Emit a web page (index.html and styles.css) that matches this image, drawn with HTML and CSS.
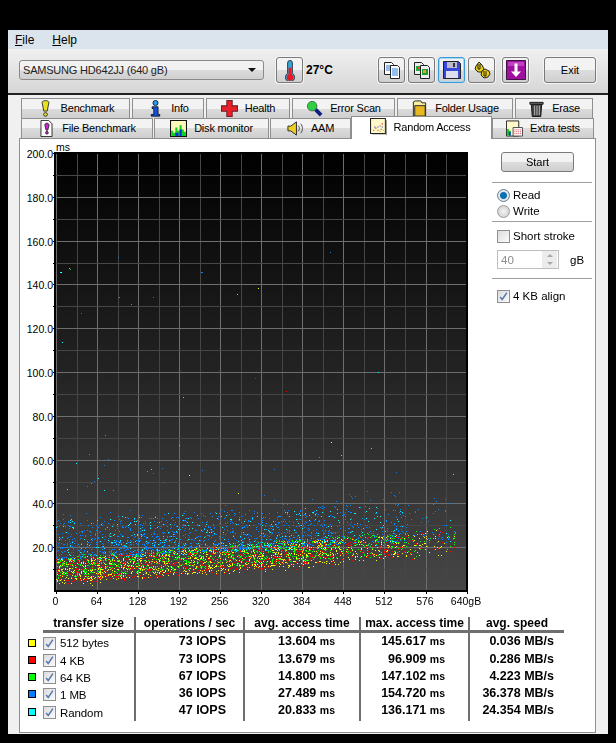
FILE: index.html
```html
<!DOCTYPE html>
<html lang="en">
<head>
	<meta charset="UTF-8">
	<title>HD Tune Pro</title>
	<link rel="stylesheet" href="styles.css">
</head>
<body>
	<svg class="defs" width="0" height="0">
		<symbol id="i-bench" viewBox="0 0 16 20"><path d="M4 3c0-3 8-3 8 0l-2 10H6z" fill="#e8e020" stroke="#222"/><circle cx="8" cy="17" r="2.2" fill="#e8e020" stroke="#222"/></symbol>
		<symbol id="i-info" viewBox="0 0 16 20"><circle cx="8" cy="3.5" r="3" fill="#20a0f0" stroke="#111"/><path d="M4 8h7v9h2v2H3v-2h3v-7H4z" fill="#1050e0" stroke="#111"/></symbol>
		<symbol id="i-health" viewBox="0 0 16 16"><path d="M5.5.5h5v5h5v5h-5v5h-5v-5h-5v-5h5z" fill="#e8202a" stroke="#702028"/></symbol>
		<symbol id="i-scan" viewBox="0 0 18 18"><path d="M10 10l6 6" stroke="#102080" stroke-width="4"/><circle cx="6.5" cy="6.5" r="5" fill="#30d040" stroke="#387040"/></symbol>
		<symbol id="i-folder" viewBox="0 0 16 18"><path d="M1.500 17V2l2-1h6l1 2h4v14z" fill="#f8f0a0" stroke="#222"/><path d="M3 17V6h11v11z" fill="#e8b820" stroke="#222"/></symbol>
		<symbol id="i-trash" viewBox="0 0 16 18"><path d="M1 2.500h14v2H1z" fill="#888" stroke="#111"/><path d="M2.500 4.500h11l-1 13h-9z" fill="#444" stroke="#111"/><path d="M6 6v10M8.500 6v10M11 6v10" stroke="#bbb"/></symbol>
		<symbol id="i-file" viewBox="0 0 16 20"><path d="M1.500.5h9l4 4v15h-13z" fill="#fff" stroke="#111"/><path d="M6 6c0-3 5-3 5 0l-1.500 6h-2z" fill="#d020d0" stroke="#222"/><circle cx="8.500" cy="15" r="1.600" fill="#d020d0" stroke="#222"/></symbol>
		<symbol id="i-disk" viewBox="0 0 16 16"><path d="M.5.5h15v15H.5z" fill="#fff8b8" stroke="#111"/><path d="M1 15v-5h2v2h2V7h2v3h2V5h2v4h2v2h2v4z" fill="#10d020"/><path d="M5 15v-3h3v3zM9 15V9h2v6z" fill="#1030e0"/></symbol>
		<symbol id="i-aam" viewBox="0 0 18 16"><path d="M1 5.500h3l6-4.500v14l-6-4.500H1z" fill="#f0d020" stroke="#222"/><path d="M12 5c1.500 2 1.500 4 0 6M14.500 3c2.500 3 2.500 7 0 10" fill="none" stroke="#444"/></symbol>
		<symbol id="i-random" viewBox="0 0 16 16"><path d="M.5.5h14v14H.5z" fill="#fff8c8" stroke="#222"/><path d="M15.500 2v14H2" fill="none" stroke="#999"/><path d="M3 11h1v1H3zM5 9h1v1H5zM7 11h1v1H7zM9 7h1v1H9zM11 5h1v1h-1z" fill="#e02020"/><path d="M4 8h1v1H4zM7 8h1v1H7zM10 10h1v1h-1zM11 8h1v1h-1z" fill="#2040e0"/><path d="M9 12h1v1H9zM12 11h1v1h-1z" fill="#d0a000"/></symbol>
		<symbol id="i-extra" viewBox="0 0 18 17"><path d="M.5.5h13v16H.5z" fill="#fff8c8" stroke="#222"/><path d="M1 16V9h2v2h2v5z" fill="#10d020"/><path d="M3 16v-4h2v4z" fill="#1030e0"/><path d="M7.500 7.500h10v9h-10z" fill="#fff" stroke="#444"/><path d="M9 10h7M9 12h7M9 14h7" stroke="#d03040" stroke-dasharray="1 1"/></symbol>
		<symbol id="i-temp" viewBox="0 0 12 22"><path d="M3.500 14V3a2.500 2.500 0 0 1 5 0v11a4.800 4.800 0 1 1-5 0z" fill="#30a8d8" stroke="#334"/><path d="M4.500 15V8h3v7a3.600 3.600 0 1 1-3 0z" fill="#e81820"/></symbol>
		<symbol id="i-copy" viewBox="0 0 18 18"><path d="M1.500 1.500h7l2 2v10h-9z" fill="#fff" stroke="#222"/><path d="M3 5h5M3 7h5M3 9h5" stroke="#3070d0"/><path d="M7.500 4.500h7l2 2v11h-9z" fill="#fff" stroke="#222"/><path d="M9 8h6M9 10h6M9 12h6M9 14h6" stroke="#2080e0"/></symbol>
		<symbol id="i-copypic" viewBox="0 0 18 18"><path d="M1.500 1.500h7l2 2v10h-9z" fill="#eee" stroke="#222"/><path d="M3 5h5v5H3z" fill="#20b040"/><path d="M4 6h2v2H4z" fill="#e04020"/><path d="M7.500 4.500h7l2 2v11h-9z" fill="#eee" stroke="#222"/><path d="M9 8h6v6H9z" fill="#20a030"/><path d="M10 9h3v3h-3z" fill="#e8a020"/></symbol>
		<symbol id="i-save" viewBox="0 0 18 18"><path d="M.5.500h15l2 2v15H.5z" fill="#3848d8" stroke="#222"/><path d="M4 1h10v6H4z" fill="#bbc"/><path d="M10 2h2v4h-2z" fill="#334"/><path d="M3 10h12v7H3z" fill="#dde"/></symbol>
		<symbol id="i-tools" viewBox="0 0 18 18"><path d="M3 5l3-4 3 3 2 4-2 3-4 0-3-3z" fill="#e8d010" stroke="#222"/><path d="M9 10l3-2 4 2 1 3-2 3-4 1-3-3z" fill="#f0d010" stroke="#222"/><path d="M5 3v5h2V3M11 10v5h2v-5" fill="none" stroke="#222"/></symbol>
		<symbol id="i-down" viewBox="0 0 20 20"><path d="M.5.500h19v19H.5z" fill="#a010a0" stroke="#401040"/><path d="M2 2h16v4H2z" fill="#c040c0"/><path d="M8.500 3.500h3v8h3.500L10 17l-5-5.500h3.500z" fill="#fff"/></symbol>
		<symbol id="i-check" viewBox="0 0 13 13"><path d="M2.500 7l2.500 3 5.500-8" fill="none" stroke="#5878b0" stroke-width="1.800"/></symbol>
	</svg>

	<div class="window">
		<div class="menubar">
			<span class="menu-item"><u>F</u>ile</span>
			<span class="menu-item"><u>H</u>elp</span>
		</div>

		<div class="toolbar">
			<div class="combo">
				<span>SAMSUNG HD642JJ (640 gB)</span>
				<span class="combo-arrow"></span>
			</div>
			<button class="tool temp-btn"><svg class="ic-temp"><use href="#i-temp"/></svg></button>
			<span class="temp">27°C</span>
			<div class="tool-group">
				<button class="tool"><svg class="ic-tool"><use href="#i-copy"/></svg></button>
				<button class="tool"><svg class="ic-tool"><use href="#i-copypic"/></svg></button>
				<button class="tool focused"><svg class="ic-tool"><use href="#i-save"/></svg></button>
				<button class="tool"><svg class="ic-tool"><use href="#i-tools"/></svg></button>
			</div>
			<button class="tool down-btn"><svg class="ic-down"><use href="#i-down"/></svg></button>
			<button class="exit-btn">Exit</button>
		</div>

		<div class="main">
			<div class="tab-row row-1">
				<div class="tab w-bench"><svg class="ic"><use href="#i-bench"/></svg>Benchmark</div>
				<div class="tab w-info"><svg class="ic"><use href="#i-info"/></svg>Info</div>
				<div class="tab w-health"><svg class="ic"><use href="#i-health"/></svg>Health</div>
				<div class="tab w-scan"><svg class="ic"><use href="#i-scan"/></svg>Error Scan</div>
				<div class="tab w-folder"><svg class="ic"><use href="#i-folder"/></svg>Folder Usage</div>
				<div class="tab w-erase"><svg class="ic"><use href="#i-trash"/></svg>Erase</div>
			</div>
			<div class="tab-row row-2">
				<div class="tab w-file"><svg class="ic"><use href="#i-file"/></svg>File Benchmark</div>
				<div class="tab w-disk"><svg class="ic"><use href="#i-disk"/></svg>Disk monitor</div>
				<div class="tab w-aam"><svg class="ic"><use href="#i-aam"/></svg>AAM</div>
				<div class="tab active w-random"><svg class="ic"><use href="#i-random"/></svg>Random Access</div>
				<div class="tab w-extra"><svg class="ic"><use href="#i-extra"/></svg>Extra tests</div>
			</div>

			<div class="panel">
				<div class="top">
					<div class="chart">
						<div class="yaxis">
							<div class="ylabel">200.0</div>
							<div class="ylabel">180.0</div>
							<div class="ylabel">160.0</div>
							<div class="ylabel">140.0</div>
							<div class="ylabel">120.0</div>
							<div class="ylabel">100.0</div>
							<div class="ylabel">80.0</div>
							<div class="ylabel">60.0</div>
							<div class="ylabel">40.0</div>
							<div class="ylabel">20.0</div>
						</div>
						<div class="plot-col">
							<div class="unit">ms</div>
							<canvas id="plot" width="416" height="442"></canvas>
							<div class="xaxis">
								<span>0</span><span>64</span><span>128</span><span>192</span><span>256</span><span>320</span><span>384</span><span>448</span><span>512</span><span>576</span><span>640gB</span>
							</div>
						</div>
					</div>

					<div class="side">
						<button class="start-btn">Start</button>
						<div class="group group-rw">
							<label class="opt"><span class="radio on"></span>Read</label>
							<label class="opt"><span class="radio"></span>Write</label>
						</div>
						<div class="group group-stroke">
							<label class="opt"><span class="box"></span>Short stroke</label>
							<div class="spin-row">
								<div class="spin">
									<span>40</span>
									<span class="spin-btns"><i class="up"></i><i class="dn"></i></span>
								</div>
								gB
							</div>
						</div>
						<div class="group group-align">
							<label class="opt"><span class="box"><svg class="tick"><use href="#i-check"/></svg></span>4 KB align</label>
						</div>
					</div>
				</div>

				<div class="stats">
					<div class="blank"></div>
					<div class="th first">transfer size</div>
					<div class="th">operations / sec</div>
					<div class="th">avg. access time</div>
					<div class="th">max. access time</div>
					<div class="th">avg. speed</div>

					<div class="sw-cell"><span class="sw yellow"></span></div>
					<div class="name"><span class="box"><svg class="tick"><use href="#i-check"/></svg></span>512 bytes</div>
					<div class="val c2">73 IOPS</div>
					<div class="val c3">13.604 <small>ms</small></div>
					<div class="val c4">145.617 <small>ms</small></div>
					<div class="val c5">0.036 MB/s</div>

					<div class="sw-cell"><span class="sw red"></span></div>
					<div class="name"><span class="box"><svg class="tick"><use href="#i-check"/></svg></span>4 KB</div>
					<div class="val c2">73 IOPS</div>
					<div class="val c3">13.679 <small>ms</small></div>
					<div class="val c4">96.909 <small>ms</small></div>
					<div class="val c5">0.286 MB/s</div>

					<div class="sw-cell"><span class="sw green"></span></div>
					<div class="name"><span class="box"><svg class="tick"><use href="#i-check"/></svg></span>64 KB</div>
					<div class="val c2">67 IOPS</div>
					<div class="val c3">14.800 <small>ms</small></div>
					<div class="val c4">147.102 <small>ms</small></div>
					<div class="val c5">4.223 MB/s</div>

					<div class="sw-cell"><span class="sw blue"></span></div>
					<div class="name"><span class="box"><svg class="tick"><use href="#i-check"/></svg></span>1 MB</div>
					<div class="val c2">36 IOPS</div>
					<div class="val c3">27.489 <small>ms</small></div>
					<div class="val c4">154.720 <small>ms</small></div>
					<div class="val c5">36.378 MB/s</div>

					<div class="sw-cell"><span class="sw cyan"></span></div>
					<div class="name"><span class="box"><svg class="tick"><use href="#i-check"/></svg></span>Random</div>
					<div class="val c2">47 IOPS</div>
					<div class="val c3">20.833 <small>ms</small></div>
					<div class="val c4">136.171 <small>ms</small></div>
					<div class="val c5">24.354 MB/s</div>
				</div>
			</div>
		</div>
	</div>

	<script src="chart.js"></script>
</body>
</html>
```

FILE: styles.css
```css
*{
	margin: 0;
	padding: 0;
	box-sizing: border-box;
}
body{
	background: #000;
	font-family: "Liberation Sans", Arial, sans-serif;
	font-size: 11px;
	color: #000;
}
.defs{
	position: absolute;
}
.window{
	margin: 30px 0 0 8px;
	width: 600px;
	height: 704px;
	background: #f0f0f0;
}
.menubar{
	height: 19px;
	background: #dbe4ed;
	display: flex;
	align-items: center;
	gap: 18px;
	padding-left: 7px;
	font-size: 12px;
}
.toolbar{
	height: 46px;
	background: linear-gradient(#f0f0f0, #d6d6d6);
	border-bottom: 2px solid #222;
	display: flex;
	align-items: center;
	padding: 0 0 2px 11px;
}
.combo{
	width: 245px;
	height: 20px;
	border: 1px solid #8a8a8a;
	border-radius: 3px;
	background: linear-gradient(#f2f2f2 50%, #dcdcdc 50%, #cfcfcf);
	display: flex;
	align-items: center;
	justify-content: space-between;
	padding: 0 7px 0 3px;
	font-size: 11px;
	letter-spacing: -0.2px;
	color: #222;
}
.combo-arrow{
	border-left: 4px solid transparent;
	border-right: 4px solid transparent;
	border-top: 4px solid #111;
}
.tool, .exit-btn, .start-btn{
	border: 1px solid #7a7a7a;
	border-radius: 3px;
	background: linear-gradient(#f3f3f3 50%, #dddddd 50%, #cfcfcf);
	font-family: inherit;
	font-size: 11px;
	color: #000;
	display: flex;
	align-items: center;
	justify-content: center;
	box-shadow: 0 0 0 1px #f4f4f4;
}
.tool{
	width: 27px;
	height: 26px;
}
.temp-btn{
	margin-left: 12px;
}
.temp{
	margin-left: 3px;
	font-size: 12px;
	font-weight: bold;
	width: 72px;
}
.tool-group{
	display: flex;
	gap: 3px;
}
.focused{
	border-color: #3b9ad6;
	box-shadow: 0 0 0 1px #a6d8f4 inset;
}
.down-btn{
	margin-left: 7px;
}
.exit-btn{
	margin-left: 15px;
	width: 52px;
	height: 26px;
}
.ic-temp{
	width: 12px;
	height: 21px;
}
.ic-tool{
	width: 18px;
	height: 18px;
}
.ic-down{
	width: 20px;
	height: 20px;
}
.main{
	padding: 3px 0 0 11px;
}
.tab-row{
	display: flex;
	height: 20px;
	margin-left: 2px;
}
.row-1{
	gap: 2px;
}
.row-2{
	gap: 1px;
}
.tab{
	height: 20px;
	border: 1px solid #8f8f8f;
	border-bottom: none;
	background: linear-gradient(#f3f3f3 50%, #dcdcdc 50%, #cfcfcf);
	display: flex;
	align-items: center;
	justify-content: center;
	gap: 7px;
	padding-bottom: 1px;
	font-size: 11px;
	letter-spacing: -0.2px;
	white-space: nowrap;
}
.ic{
	width: 17px;
	height: 17px;
}
.active{
	position: relative;
	z-index: 2;
	height: 23px;
	margin: -2px -1px 0 -1px;
	background: #fff;
	padding: 0 3px 3px 0;
}
.w-bench{ width: 109px; }
.w-info{ width: 72px; }
.w-health{ width: 84px; }
.w-scan{ width: 103px; }
.w-folder{ width: 116px; }
.w-erase{ width: 78px; }
.w-file{ width: 132px; }
.w-disk{ width: 115px; }
.w-aam{ width: 81px; }
.w-random{ width: 141px; }
.w-extra{ width: 102px; }
.panel{
	width: 577px;
	height: 595px;
	background: #fff;
	border: 1px solid #8f8f8f;
}
.top{
	display: flex;
}
.chart{
	display: flex;
	width: 471px;
}
.yaxis{
	width: 33px;
	margin-top: -6px;
	height: 0;
}
.ylabel{
	height: 43.8px;
	line-height: 43.8px;
	text-align: right;
	font-size: 10.5px;
}
.plot-col{
	width: 438px;
}
.unit{
	height: 13px;
	line-height: 17px;
	padding-left: 3px;
	font-size: 10.5px;
}
#plot{
	display: block;
}
.xaxis{
	display: flex;
	margin-left: -18px;
	height: 14px;
	line-height: 14px;
	font-size: 10.5px;
}
.xaxis span{
	width: 41.05px;
	text-align: center;
	flex: none;
}
.side{
	width: 100px;
	margin-left: 1px;
	padding-top: 13px;
}
.start-btn{
	width: 73px;
	height: 20px;
	margin-left: 9px;
	box-shadow: none;
}
.group{
	border-top: 1px solid #a0a0a0;
	padding-left: 5px;
	font-size: 11.5px;
}
.group-rw{
	margin-top: 10px;
	height: 39px;
	padding-top: 4px;
}
.group-stroke{
	height: 57px;
	padding-top: 6px;
}
.group-align{
	padding-top: 9px;
}
.opt{
	display: flex;
	align-items: center;
	gap: 3px;
	height: 16px;
}
.radio{
	width: 13px;
	height: 13px;
	border-radius: 50%;
	border: 1px solid #999;
	background: radial-gradient(#f4f4f4, #c8c8c8);
}
.radio.on{
	background: radial-gradient(circle, #0c6fb0 0, #0c6fb0 3px, #dfe8ee 4px);
	border-color: #6d7a85;
}
.box{
	flex: none;
	display: inline-block;
	width: 13px;
	height: 13px;
	border: 1px solid #8f8f8f;
	background: linear-gradient(135deg, #dcdcdc, #fbfbfb);
}
.tick{
	display: block;
	width: 11px;
	height: 11px;
}
.spin-row{
	display: flex;
	align-items: center;
	gap: 11px;
	margin-top: 6px;
}
.spin{
	width: 62px;
	height: 19px;
	border: 1px solid #bdbdbd;
	background: #fff;
	color: #8c8c8c;
	display: flex;
	justify-content: space-between;
	align-items: center;
	padding-left: 3px;
	font-size: 11.5px;
}
.spin-btns{
	width: 15px;
	height: 17px;
	margin-right: 1px;
	display: flex;
	flex-direction: column;
	background: #ececec;
	align-items: center;
	justify-content: space-around;
}
.spin-btns i{
	border-left: 3px solid transparent;
	border-right: 3px solid transparent;
}
.spin-btns .up{
	border-bottom: 3px solid #a8a8a8;
}
.spin-btns .dn{
	border-top: 3px solid #a8a8a8;
}
.stats{
	display: grid;
	grid-template-columns: 15px 91px 109px 116px 109px 96px;
	grid-template-rows: 16px 18px 17px 17px 17px 19px;
	margin: 9px 0 0 8px;
}
.th{
	border-left: 2px solid #6e6e6e;
	border-bottom: 3px solid #6e6e6e;
	font-weight: bold;
	font-size: 12px;
	line-height: 13px;
	text-align: center;
	white-space: nowrap;
}
.th.first{
	border-left: none;
}
.sw-cell{
	display: flex;
	align-items: center;
	padding-top: 1px;
}
.sw{
	width: 8px;
	height: 8px;
	border: 1px solid #000;
}
.yellow{ background: #ff0; }
.red{ background: #f00; }
.green{ background: #0f0; }
.blue{ background: #0080ff; }
.cyan{ background: #0ff; }
.name{
	display: flex;
	align-items: center;
	gap: 4px;
	padding-top: 2px;
	font-size: 11.5px;
	letter-spacing: -0.1px;
}
.val{
	border-left: 2px solid #6e6e6e;
	font-weight: bold;
	font-size: 12.5px;
	line-height: 17px;
	text-align: right;
	white-space: nowrap;
}
.val small{
	font-size: 10.5px;
}
.c2{ padding-right: 17px; }
.c3{ padding-right: 24px; }
.c4{ padding-right: 23px; }
.c5{ padding-right: 10px; }
```

FILE: chart.js
```js
var cv = document.getElementById('plot');
var ctx = cv.getContext('2d');

// plot corner inside the canvas, and scale
var ox = 2;
var oy = 0;
var pw = 412;
var bottom = 439;
var perMs = 2.19;

var seed = 4711;
function rnd(){
	seed = (seed * 16807) % 2147483647;
	return seed / 2147483647;
}

function background(){
	var grad = ctx.createLinearGradient(0, 0, 0, bottom);
	grad.addColorStop(0, '#000000');
	grad.addColorStop(1, '#464646');
	ctx.fillStyle = grad;
	ctx.fillRect(ox, oy, pw, bottom);
}

function grid(){
	var i, x, y;
	for( i = 0; i <= 20; i++ ){
		x = Math.round(ox + 1 + i * 20.53);
		ctx.fillStyle = i % 2 == 0 ? '#6e6e6e' : '#464646';
		ctx.fillRect(x, 2, 1, bottom - 2);
		ctx.fillStyle = '#000';
		if( i % 2 == 0 ){
			ctx.fillRect(x, bottom, 1, 3);
		}
	}
	for( i = 0; i < 20; i++ ){
		y = Math.round(bottom - (i + 1) * 21.9);
		ctx.fillStyle = i % 2 == 1 ? '#6e6e6e' : '#464646';
		ctx.fillRect(ox, y, pw, 1);
		ctx.fillStyle = '#000';
		ctx.fillRect(0, y, 2, 1);
	}
}

function axes(){
	ctx.fillStyle = '#000';
	ctx.fillRect(ox - 1, 0, 2, bottom + 1);
	ctx.fillRect(ox, bottom - 1, pw + 1, 2);
	ctx.fillRect(ox + pw - 1, 0, 2, bottom);
	ctx.fillRect(ox, 0, pw, 2);
}

function dot(x, ms, color){
	ctx.fillStyle = color;
	ctx.fillRect(Math.round(ox + 1 + x * pw), Math.round(bottom - ms * perMs), 1, 1);
}

// the x spread thins out past 70% of the disk
function spreadX(){
	var x = rnd();
	if( x > 0.68 && rnd() < 0.6 ){
		x = rnd();
	}
	if( x > 0.85 && rnd() < 0.6 ){
		x = rnd();
	}
	if( x > 0.97 ){
		x = rnd() * 0.9;
	}
	return x;
}

function scatter(){
	var colors = ['#ffff00', '#ff0000', '#00ff00'];
	var i, x, lo, c, ms, list = [];
	for( i = 0; i < 1000; i++ ){
		x = spreadX();
		list.push([x, 15 + 9 * x + 24 * rnd() * rnd(), '#0080ff']);
		x = spreadX();
		list.push([x, 14 + 9 * x + 19 * Math.pow(rnd(), 1.4), rnd() < 0.45 ? '#00ffff' : '#0090ff']);
	}
	for( i = 0; i < 3600; i++ ){
		x = spreadX();
		lo = 4 + 14 * x - 3 * rnd() * rnd();
		c = colors[i % 3];
		ms = lo + rnd() * 11;
		if( c == '#00ff00' ){
			ms = lo + 2 + rnd() * 10;
		}
		list.push([x, ms, c]);
	}
	// shuffle so no colour sits on top everywhere
	for( i = list.length - 1; i > 0; i-- ){
		var j = Math.floor(rnd() * (i + 1));
		var t = list[i];
		list[i] = list[j];
		list[j] = t;
	}
	for( i = 0; i < list.length; i++ ){
		dot(list[i][0], list[i][1], list[i][2]);
	}
}

// stray points read off the screen, page x / y
var strays = [
	[118,257,'b'],[60,272,'c'],[69,268,'c'],[201,272,'b'],[153,297,'c'],[81,313,'g'],[131,304,'g'],[237,294,'g'],[258,288,'g'],[62,342,'g'],
	[118,257,'b'],[61,272,'y'],[70,269,'g'],[202,272,'b'],[153,297,'b'],[237,294,'c'],[258,288,'y'],[153,297,'b'],[119,297,'g'],[81,313,'b'],
	[62,342,'c'],[255,378,'r'],[183,397,'c'],[105,435,'g'],[179,445,'c'],[89,454,'g'],[76,463,'c'],[81,460,'b'],[108,459,'b'],[104,465,'b'],
	[98,478,'c'],[94,481,'b'],[91,483,'g'],[87,486,'b'],[67,489,'c'],[104,490,'c'],[113,490,'g'],[147,471,'g'],[151,469,'c'],[153,473,'b'],
	[162,468,'b'],[163,482,'b'],[189,475,'y'],[202,470,'b'],[238,493,'y'],
	[330,252,'b'],[378,372,'c'],[286,391,'r'],[331,442,'y'],[371,448,'c'],[341,455,'c'],[319,457,'g'],[274,469,'b'],[396,472,'b'],[453,474,'c'],
	[367,491,'b'],[264,495,'b'],[391,492,'b'],[395,496,'b'],[434,498,'b']
];

function straysDraw(){
	var names = { b: '#0080ff', c: '#00ffff', g: '#20c040', y: '#ffff00', r: '#ff0000' };
	for( var i = 0; i < strays.length; i++ ){
		ctx.fillStyle = names[strays[i][2]];
		ctx.fillRect(strays[i][0] - 53, strays[i][1] - 152, 1, 1);
	}
}

background();
grid();
scatter();
straysDraw();
axes();
```
